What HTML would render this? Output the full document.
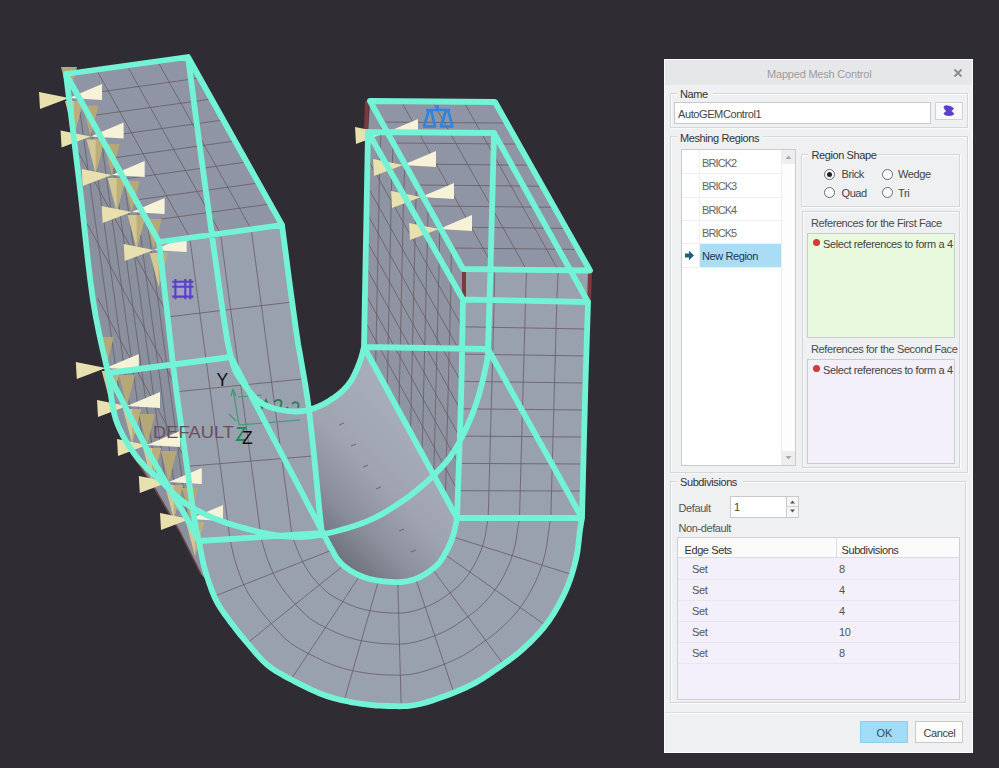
<!DOCTYPE html>
<html><head><meta charset="utf-8"><style>
html,body{margin:0;padding:0;}
body{width:999px;height:768px;overflow:hidden;background:#2f2d33;position:relative;font-family:"Liberation Sans",sans-serif;}
</style></head><body>
<svg width="999" height="768" viewBox="0 0 999 768" style="position:absolute;left:0;top:0"><defs><linearGradient id="cyl" x1="0" y1="1" x2="1" y2="0"><stop offset="0" stop-color="#5f636f"/><stop offset="0.45" stop-color="#8a8f9c"/><stop offset="1" stop-color="#a6abb8"/></linearGradient><linearGradient id="cyl2" gradientUnits="userSpaceOnUse" x1="430" y1="445" x2="325" y2="548"><stop offset="0" stop-color="#a7acb9"/><stop offset="0.4" stop-color="#9fa4b0"/><stop offset="0.72" stop-color="#8b8f9b"/><stop offset="1" stop-color="#6c707b"/></linearGradient></defs><polygon points="108.0,373.0 116.0,420.0 131.0,452.0 155.0,489.0 180.0,532.0 201.0,574.0 209.0,582.5 199.0,541.0" fill="#8a909e" /><polygon points="66.0,74.0 159.0,242.0 168.0,320.0 175.0,380.0 186.0,460.0 195.0,523.0 199.0,541.0 182.0,529.0 155.0,489.0 131.0,452.0 116.0,420.0 108.0,373.0 93.0,300.0 79.0,180.0" fill="#8a909e" /><polygon points="66.0,74.0 188.0,57.0 282.0,225.0 159.0,242.0" fill="#8f95a4" /><polygon points="370.0,101.0 463.0,269.0 463.0,299.5 461.0,400.0 457.0,518.0 364.0,347.0 368.0,132.0" fill="#8e94a2" /><polygon points="370.0,101.0 495.0,102.0 590.0,270.5 463.0,269.0" fill="#8f95a4" /><polygon points="306.0,410.5 308.9,409.8 311.8,408.9 314.7,407.9 317.7,406.8 320.6,405.5 323.5,404.1 326.3,402.6 329.0,401.0 331.6,399.3 334.2,397.6 336.8,395.7 339.2,393.7 341.6,391.7 343.9,389.5 346.0,387.3 348.0,385.0 349.8,382.6 351.5,380.0 353.0,377.3 354.4,374.6 355.7,371.8 356.9,369.1 358.0,366.5 359.0,364.0 359.9,361.6 360.8,359.1 361.5,356.6 362.2,354.2 362.8,352.0 363.2,350.0 363.7,348.3 364.0,347.0 457.0,518.0 457.0,518.0 456.7,519.4 456.4,521.3 455.9,523.5 455.4,526.0 454.9,528.6 454.3,531.2 453.7,533.7 453.0,536.0 452.3,538.1 451.5,540.2 450.7,542.3 449.8,544.3 448.9,546.3 448.0,548.3 447.0,550.2 446.0,552.0 445.0,553.8 444.1,555.5 443.1,557.1 442.1,558.8 441.0,560.3 439.9,561.9 438.5,563.4 437.0,565.0 435.3,566.6 433.4,568.2 431.3,569.9 429.2,571.5 426.9,573.1 424.6,574.5 422.3,575.8 420.0,577.0 417.7,578.0 415.4,578.9 413.1,579.7 410.7,580.4 408.2,581.0 405.7,581.4 402.9,581.8 400.0,582.0 396.8,582.1 393.3,582.0 389.6,581.8 385.8,581.5 382.0,581.1 378.3,580.6 374.8,580.0 371.6,579.4 368.7,578.7 365.9,577.9 363.3,577.0 360.8,576.0 358.5,575.0 356.2,573.9 354.1,572.7 352.0,571.6 350.0,570.4 348.2,569.2 346.4,567.9 344.8,566.6 343.2,565.3 341.7,563.9 340.3,562.5 339.0,561.0 337.8,559.5 336.6,558.0 335.6,556.4 334.7,554.8 333.8,553.1 332.9,551.4 332.0,549.7 331.0,548.0 329.9,546.1 328.8,544.0 327.6,541.9 326.5,539.7 325.4,537.6 324.4,535.7 323.6,534.2 323.0,533.0 320.8,523.4 309.0,412.0" fill="url(#cyl2)" /><polygon points="159.0,242.0 282.0,225.0 296.0,330.0 309.0,410.0 320.8,523.4 323.0,533.0 323.6,534.2 324.4,535.7 325.4,537.6 326.5,539.7 327.6,541.9 328.8,544.0 329.9,546.1 331.0,548.0 332.0,549.7 332.9,551.4 333.8,553.1 334.7,554.8 335.6,556.4 336.6,558.0 337.8,559.5 339.0,561.0 340.3,562.5 341.7,563.9 343.2,565.3 344.8,566.6 346.4,567.9 348.2,569.2 350.0,570.4 352.0,571.6 354.1,572.7 356.2,573.9 358.5,575.0 360.8,576.0 363.3,577.0 365.9,577.9 368.7,578.7 371.6,579.4 374.8,580.0 378.3,580.6 382.0,581.1 385.8,581.5 389.6,581.8 393.3,582.0 396.8,582.1 400.0,582.0 402.9,581.8 405.7,581.4 408.2,581.0 410.7,580.4 413.1,579.7 415.4,578.9 417.7,578.0 420.0,577.0 422.3,575.8 424.6,574.5 426.9,573.1 429.2,571.5 431.3,569.9 433.4,568.2 435.3,566.6 437.0,565.0 438.5,563.4 439.9,561.9 441.0,560.3 442.1,558.8 443.1,557.1 444.1,555.5 445.0,553.8 446.0,552.0 447.0,550.2 448.0,548.3 448.9,546.3 449.8,544.3 450.7,542.3 451.5,540.2 452.3,538.1 453.0,536.0 453.7,533.7 454.3,531.2 454.9,528.6 455.4,526.0 455.9,523.5 456.4,521.3 456.7,519.4 457.0,518.0 461.0,400.0 463.0,299.5 463.0,269.0 590.0,270.5 588.0,302.0 585.0,400.0 582.0,518.0 581.9,518.8 581.7,519.8 581.5,520.9 581.2,522.2 581.0,523.7 580.7,525.5 580.4,527.6 580.0,530.0 579.6,532.8 579.3,536.0 578.9,539.5 578.5,543.3 578.0,547.2 577.5,551.2 576.8,555.2 576.0,559.0 575.1,562.8 574.1,566.6 573.0,570.4 571.9,574.3 570.6,578.2 569.2,582.1 567.7,586.1 566.0,590.0 564.2,594.0 562.2,598.1 560.1,602.2 557.9,606.3 555.5,610.4 553.1,614.4 550.6,618.3 548.0,622.0 545.3,625.6 542.5,629.1 539.5,632.5 536.5,635.8 533.4,639.0 530.3,642.1 527.1,645.1 524.0,648.0 520.9,650.8 517.8,653.4 514.6,656.0 511.4,658.4 508.2,660.8 504.9,663.2 501.5,665.6 498.0,668.0 494.5,670.4 491.0,672.9 487.4,675.3 483.8,677.7 480.0,680.1 476.0,682.4 471.7,684.7 467.0,687.0 461.8,689.3 456.0,691.7 449.9,694.2 443.6,696.6 437.2,698.8 431.1,700.9 425.3,702.6 420.0,704.0 415.3,705.0 410.9,705.7 406.9,706.1 403.1,706.2 399.3,706.3 395.6,706.2 391.9,706.1 388.0,706.0 384.0,705.9 380.0,705.7 376.0,705.5 372.0,705.1 368.0,704.7 364.0,704.2 360.0,703.6 356.0,703.0 352.0,702.3 348.0,701.5 344.0,700.7 340.0,699.8 336.0,698.7 332.0,697.6 328.0,696.4 324.0,695.0 319.9,693.5 315.8,691.7 311.7,689.9 307.5,687.9 303.5,685.9 299.5,683.9 295.6,681.9 292.0,680.0 288.5,678.2 285.2,676.4 282.0,674.6 278.9,672.8 275.9,671.0 273.0,669.1 270.2,667.1 267.5,665.0 264.9,662.7 262.4,660.4 260.1,657.9 257.8,655.4 255.6,652.8 253.4,650.2 251.2,647.6 249.0,645.0 246.8,642.4 244.6,639.8 242.4,637.2 240.2,634.6 238.1,631.9 236.0,629.3 234.0,626.6 232.0,624.0 230.0,621.4 228.1,618.7 226.1,616.1 224.2,613.5 222.4,610.8 220.6,608.2 219.0,605.6 217.5,603.0 216.1,600.4 214.9,597.8 213.8,595.3 212.7,592.7 211.7,590.2 210.8,587.6 209.9,585.1 209.0,582.5 208.1,579.9 207.3,577.4 206.5,574.8 205.7,572.3 205.0,569.7 204.3,567.2 203.6,564.6 203.0,562.0 202.4,559.3 201.8,556.3 201.2,553.2 200.6,550.2 200.1,547.4 199.7,544.8 199.3,542.6 199.0,541.0 195.0,523.0 186.0,460.0 175.0,380.0 168.0,320.0" fill="#99a0ae" /><path d="M96.5,69.8L189.8,237.8 M127.0,65.5L220.5,233.5 M157.5,61.2L251.2,229.2 M77.6,95.0L199.8,78.0 M89.2,116.0L211.5,99.0 M100.9,137.0L223.2,120.0 M112.5,158.0L235.0,141.0 M124.1,179.0L246.8,162.0 M135.8,200.0L258.5,183.0 M147.4,221.0L270.2,204.0 M401.2,101.2L494.8,269.4 M432.5,101.5L526.5,269.8 M463.8,101.8L558.2,270.1 M381.6,122.0L506.9,123.1 M393.2,143.0L518.8,144.1 M404.9,164.0L530.6,165.2 M416.5,185.0L542.5,186.2 M428.1,206.0L554.4,207.3 M439.8,227.0L566.2,228.4 M451.4,248.0L578.1,249.4 M189.8,237.8L230.0,539.0 M220.5,233.5L261.0,537.0 M251.2,229.2L292.0,535.0 M169.0,316.8L292.2,302.0 M179.0,391.5L302.5,379.0 M189.0,466.2L312.8,456.0 M494.2,300.1L488.2,518.0 M525.5,300.8L519.5,518.0 M556.8,301.4L550.8,518.0 M462.2,326.8L587.2,329.0 M461.5,354.1L586.5,356.0 M460.8,381.4L585.8,383.0 M460.0,408.8L585.0,410.0 M459.2,436.1L584.2,437.0 M458.5,463.4L583.5,464.0 M457.8,490.7L582.8,491.0 M494.8,269.4L494.2,300.1 M526.5,269.8L525.5,300.8 M558.2,270.1L556.8,301.4 M77.6,95.0L119.4,394.0 M89.2,116.0L130.8,415.0 M100.9,137.0L142.1,436.0 M112.5,158.0L153.5,457.0 M124.1,179.0L164.9,478.0 M135.8,200.0L176.2,499.0 M147.4,221.0L187.6,520.0 M76.5,148.8L169.0,316.8 M87.0,223.5L179.0,391.5 M97.5,298.2L189.0,466.2 M379.9,152.9L375.6,368.4 M391.8,173.9L387.2,389.8 M403.6,194.8L398.9,411.1 M415.5,215.8L410.5,432.5 M427.4,236.7L422.1,453.9 M439.2,257.6L433.8,475.2 M451.1,278.6L445.4,496.6 M367.5,158.9L462.2,326.8 M367.0,185.8L461.5,354.1 M366.5,212.6L460.8,381.4 M366.0,239.5L460.0,408.8 M365.5,266.4L459.2,436.1 M365.0,293.2L458.5,463.4 M364.5,320.1L457.8,490.7 M381.6,122.0L379.9,152.9 M393.2,143.0L391.8,173.9 M404.9,164.0L403.6,194.8 M416.5,185.0L415.5,215.8 M428.1,206.0L427.4,236.7 M439.8,227.0L439.2,257.6 M451.4,248.0L451.1,278.6 M332.1,550.0L214.2,596.3 M343.5,565.5L247.3,643.0 M359.9,575.6L291.0,679.5 M378.5,580.6L344.2,700.7 M397.8,582.1L401.2,706.3 M415.7,578.8L453.8,692.6 M432.3,569.1L503.5,664.2 M444.7,554.4L545.5,625.3 M452.7,536.8L571.8,574.5 M292.0,535.0 L293.8,540.4 L295.8,545.8 L297.9,551.1 L300.2,556.4 L302.6,561.6 L305.4,566.7 L308.4,571.6 L311.8,576.3 L315.5,580.7 L319.4,584.9 L323.5,588.9 L327.8,592.7 L332.5,596.1 L337.5,599.0 L342.7,601.6 L347.9,604.0 L353.2,606.1 L358.7,608.0 L364.3,609.5 L369.9,610.6 L375.6,611.6 L381.3,612.3 L387.1,612.8 L392.9,613.0 L398.6,613.1 L404.4,612.8 L410.1,611.8 L415.7,610.5 L421.2,608.7 L426.6,606.7 L431.9,604.4 L437.0,601.8 L441.9,598.7 L446.6,595.4 L451.3,592.0 L455.8,588.3 L460.0,584.4 L463.9,580.2 L467.4,575.7 L470.7,570.9 L473.7,566.0 L476.4,560.9 L478.9,555.7 L481.1,550.3 L482.9,544.9 L484.4,539.3 L485.6,533.7 L486.5,528.0 L487.5,522.3 L488.2,518.0 M261.0,537.0 L262.9,544.4 L265.0,551.7 L267.4,559.0 L270.2,566.1 L273.2,573.2 L276.7,579.9 L281.0,586.4 L285.5,592.6 L290.3,598.5 L295.4,604.3 L300.6,609.9 L306.0,615.3 L312.1,620.0 L318.6,624.0 L325.4,627.5 L332.3,630.9 L339.3,634.0 L346.5,636.8 L353.8,638.9 L361.3,640.7 L368.9,642.0 L376.5,643.0 L384.1,643.7 L391.8,644.0 L399.5,644.2 L407.2,643.6 L414.7,642.2 L422.1,640.2 L429.4,637.7 L436.5,635.0 L443.6,632.0 L450.4,628.4 L456.9,624.4 L463.2,620.0 L469.5,615.5 L475.5,610.8 L481.3,605.7 L486.6,600.2 L491.6,594.4 L496.2,588.3 L500.3,581.8 L504.1,575.1 L507.4,568.2 L510.4,561.1 L512.8,553.8 L514.8,546.4 L516.3,538.9 L517.4,531.3 L518.5,523.7 L519.5,518.0 M230.0,539.0 L232.0,548.3 L234.2,557.6 L236.9,566.8 L240.1,575.8 L243.7,584.7 L248.1,593.2 L253.5,601.2 L259.2,608.9 L265.2,616.4 L271.4,623.7 L277.7,630.9 L284.2,637.8 L291.6,643.9 L299.8,649.0 L308.2,653.5 L316.8,657.8 L325.4,661.9 L334.3,665.5 L343.4,668.4 L352.7,670.7 L362.2,672.5 L371.7,673.8 L381.2,674.7 L390.8,675.0 L400.4,675.2 L409.9,674.5 L419.3,672.6 L428.5,669.9 L437.5,666.7 L446.5,663.3 L455.3,659.5 L463.8,655.1 L471.9,650.0 L479.8,644.5 L487.7,639.0 L495.3,633.2 L502.5,626.9 L509.4,620.2 L515.8,613.2 L521.7,605.6 L527.0,597.6 L531.7,589.3 L536.0,580.7 L539.7,571.9 L542.7,562.8 L545.2,553.5 L547.0,544.1 L548.2,534.6 L549.5,525.1 L550.8,518.0" stroke="#685a5e" stroke-width="0.9" fill="none" opacity="0.85"/><path d="M339,425l5,-2M351,446l5,-2M363,467l5,-2M376,489l5,-2M399,531l5,-2M411,552l5,-2" stroke="#5f5f6c" stroke-width="1.1" opacity="0.75"/><polyline points="131,452 155,489 180,532 201,574" fill="none" stroke="#6e4646" stroke-width="1.5"/><path d="M367,101L366,132M464,271L464,299M590,272L589,301" stroke="#7a3a3e" stroke-width="4"/><polygon points="61,67 77,67 69,98" fill="#b5a776"/><polygon points="65,101 83,101 74,135" fill="#d3c794"/><polygon points="74,101 83,101 74,135" fill="#bcae7c"/><polygon points="39,92 40,109 69,98" fill="#e8e0ae"/><polygon points="102,84 102,100 69,98" fill="#f6f2d8"/><polygon points="82.6,105.5 98.6,105.5 90.6,136.5" fill="#b5a776"/><polygon points="86.6,139.5 104.6,139.5 95.6,173.5" fill="#d3c794"/><polygon points="95.6,139.5 104.6,139.5 95.6,173.5" fill="#bcae7c"/><polygon points="60.599999999999994,130.5 61.599999999999994,147.5 90.6,136.5" fill="#e8e0ae"/><polygon points="123.6,122.5 123.6,138.5 90.6,136.5" fill="#f6f2d8"/><polygon points="103.7,144 119.7,144 111.7,175" fill="#b5a776"/><polygon points="107.7,178 125.7,178 116.7,212" fill="#d3c794"/><polygon points="116.7,178 125.7,178 116.7,212" fill="#bcae7c"/><polygon points="81.7,169 82.7,186 111.7,175" fill="#e8e0ae"/><polygon points="144.7,161 144.7,177 111.7,175" fill="#f6f2d8"/><polygon points="123.6,181 139.6,181 131.6,212" fill="#b5a776"/><polygon points="127.6,215 145.6,215 136.6,249" fill="#d3c794"/><polygon points="136.6,215 145.6,215 136.6,249" fill="#bcae7c"/><polygon points="101.6,206 102.6,223 131.6,212" fill="#e8e0ae"/><polygon points="164.6,198 164.6,214 131.6,212" fill="#f6f2d8"/><polygon points="145.7,219 161.7,219 153.7,250" fill="#b5a776"/><polygon points="149.7,253 167.7,253 158.7,287" fill="#d3c794"/><polygon points="158.7,253 167.7,253 158.7,287" fill="#bcae7c"/><polygon points="123.69999999999999,244 124.69999999999999,261 153.7,250" fill="#e8e0ae"/><polygon points="186.7,236 186.7,252 153.7,250" fill="#f6f2d8"/><polygon points="97.8,337 113.8,337 105.8,368" fill="#b5a776"/><polygon points="101.8,371 119.8,371 110.8,405" fill="#d3c794"/><polygon points="110.8,371 119.8,371 110.8,405" fill="#bcae7c"/><polygon points="75.8,362 76.8,379 105.8,368" fill="#e8e0ae"/><polygon points="138.8,354 138.8,370 105.8,368" fill="#f6f2d8"/><polygon points="119,375 135,375 127,406" fill="#b5a776"/><polygon points="123,409 141,409 132,443" fill="#d3c794"/><polygon points="132,409 141,409 132,443" fill="#bcae7c"/><polygon points="97,400 98,417 127,406" fill="#e8e0ae"/><polygon points="160,392 160,408 127,406" fill="#f6f2d8"/><polygon points="139,414 155,414 147,445" fill="#b5a776"/><polygon points="143,448 161,448 152,482" fill="#d3c794"/><polygon points="152,448 161,448 152,482" fill="#bcae7c"/><polygon points="117,439 118,456 147,445" fill="#e8e0ae"/><polygon points="180,431 180,447 147,445" fill="#f6f2d8"/><polygon points="160.8,451 176.8,451 168.8,482" fill="#b5a776"/><polygon points="164.8,485 182.8,485 173.8,519" fill="#d3c794"/><polygon points="173.8,485 182.8,485 173.8,519" fill="#bcae7c"/><polygon points="138.8,476 139.8,493 168.8,482" fill="#e8e0ae"/><polygon points="201.8,468 201.8,484 168.8,482" fill="#f6f2d8"/><polygon points="182,488 198,488 190,519" fill="#b5a776"/><polygon points="186,522 204,522 195,556" fill="#d3c794"/><polygon points="195,522 204,522 195,556" fill="#bcae7c"/><polygon points="160,513 161,530 190,519" fill="#e8e0ae"/><polygon points="223,505 223,521 190,519" fill="#f6f2d8"/><polygon points="355,127 356,144 385,133" fill="#e8e0ae"/><polygon points="418,119 418,135 385,133" fill="#f6f2d8"/><polygon points="373,159 374,176 403,165" fill="#e8e0ae"/><polygon points="436,151 436,167 403,165" fill="#f6f2d8"/><polygon points="391,191 392,208 421,197" fill="#e8e0ae"/><polygon points="454,183 454,199 421,197" fill="#f6f2d8"/><polygon points="409,223 410,240 439,229" fill="#e8e0ae"/><polygon points="472,215 472,231 439,229" fill="#f6f2d8"/><g stroke="#3a9c74" stroke-width="1.2" fill="none"><path d="M233,389L239,425M239,425L300,420M238,397L262,395M236,421L229,414M233,389L231,396M233,389L236,396"/><path d="M237,428H245L237,440H246" stroke="#1f8a5a" stroke-width="1.8"/><path d="M258,398L262,408L266,400L270,410M274,402C278,398 283,400 281,405C279,410 285,411 288,407M292,404C296,400 300,403 298,408" stroke="#2a7a58" stroke-width="1.8"/></g><path d="M66.0,74.0 L188.0,57.0 L282.0,225.0 L159.0,242.0 L66.0,74.0 M66.0,74.0 L67.4,85.4 L69.3,101.0 L71.6,119.5 L74.1,139.7 L76.6,160.3 L79.0,180.0 L81.3,199.7 L83.6,220.7 L85.9,242.1 L88.2,263.0 L90.6,282.6 L93.0,300.0 L95.6,315.7 L98.5,330.5 L101.4,344.0 L104.1,355.8 L106.4,365.6 L108.0,373.0 M188.0,57.0 L189.6,68.9 L191.7,84.9 L194.2,104.1 L197.0,125.4 L200.0,147.7 L203.0,170.0 L206.3,194.2 L210.1,221.4 L214.0,249.8 L217.8,277.0 L221.2,301.1 L224.0,320.0 L226.1,333.1 L227.6,342.1 L228.8,347.9 L229.7,351.6 L230.4,354.3 L231.0,357.0 M159.0,242.0 L160.0,250.7 L161.4,262.9 L163.1,277.2 L164.8,292.4 L166.5,307.1 L168.0,320.0 L169.2,330.8 L170.3,340.6 L171.4,349.9 L172.4,359.2 L173.6,369.1 L175.0,380.0 L176.6,392.4 L178.4,405.8 L180.4,419.8 L182.3,433.9 L184.2,447.4 L186.0,460.0 L187.7,472.0 L189.3,483.9 L190.9,495.4 L192.4,506.0 L193.8,515.3 L195.0,523.0 L196.0,528.8 L196.9,533.0 L197.6,535.9 L198.1,538.0 L198.6,539.6 L199.0,541.0 M282.0,225.0 L283.5,236.7 L285.7,253.1 L288.2,272.5 L290.9,293.0 L293.6,312.7 L296.0,330.0 L298.2,344.4 L300.5,357.3 L302.6,369.5 L304.8,381.8 L306.9,395.0 L309.0,410.0 L311.1,428.2 L313.4,449.2 L315.6,471.1 L317.6,492.1 L319.4,510.1 L320.8,523.4 L321.7,531.1 L322.3,534.6 L322.6,535.3 L322.8,534.4 L322.9,533.2 L323.0,533.0 M108.0,373.0 L231.0,357.0 M199.0,541.0 L323.0,533.0 M108.0,373.0 L150.0,455.0 L186.0,517.0 L199.0,541.0 M231.0,357.0 L323.0,533.0 M370.0,101.0 L495.0,102.0 L590.0,270.5 L463.0,269.0 L370.0,101.0 M368.0,132.0 L494.0,133.0 L588.0,302.0 L463.0,299.5 L368.0,132.0 M368.0,132.0 L364.0,347.0 M494.0,133.0 L493.7,145.9 L493.2,164.0 L492.7,185.3 L492.1,208.0 L491.5,230.2 L491.0,250.0 L490.5,268.7 L489.9,288.0 L489.3,306.8 L488.8,324.0 L488.3,338.4 L488.0,349.0 M463.0,299.5 L462.8,310.2 L462.6,324.9 L462.2,342.4 L461.9,361.5 L461.5,381.1 L461.0,400.0 L460.4,420.0 L459.7,442.4 L458.9,465.3 L458.1,486.8 L457.5,505.0 L457.0,518.0 M588.0,302.0 L587.7,312.4 L587.2,326.7 L586.7,343.6 L586.1,362.2 L585.5,381.4 L585.0,400.0 L584.5,419.9 L583.9,442.2 L583.3,465.1 L582.8,486.7 L582.3,504.9 L582.0,518.0 M364.0,347.0 L488.0,349.0 M457.0,518.0 L582.0,518.0 M364.0,347.0 L457.0,518.0 M488.0,349.0 L582.0,518.0 M199.0,541.0 L199.3,542.6 L199.7,544.8 L200.1,547.4 L200.6,550.2 L201.2,553.2 L201.8,556.3 L202.4,559.3 L203.0,562.0 L203.6,564.6 L204.3,567.2 L205.0,569.7 L205.7,572.3 L206.5,574.8 L207.3,577.4 L208.1,579.9 L209.0,582.5 L209.9,585.1 L210.8,587.6 L211.7,590.2 L212.7,592.7 L213.8,595.3 L214.9,597.8 L216.1,600.4 L217.5,603.0 L219.0,605.6 L220.6,608.2 L222.4,610.8 L224.2,613.5 L226.1,616.1 L228.1,618.7 L230.0,621.4 L232.0,624.0 L234.0,626.6 L236.0,629.3 L238.1,631.9 L240.2,634.6 L242.4,637.2 L244.6,639.8 L246.8,642.4 L249.0,645.0 L251.2,647.6 L253.4,650.2 L255.6,652.8 L257.8,655.4 L260.1,657.9 L262.4,660.4 L264.9,662.7 L267.5,665.0 L270.2,667.1 L273.0,669.1 L275.9,671.0 L278.9,672.8 L282.0,674.6 L285.2,676.4 L288.5,678.2 L292.0,680.0 L295.6,681.9 L299.5,683.9 L303.5,685.9 L307.5,687.9 L311.7,689.9 L315.8,691.7 L319.9,693.5 L324.0,695.0 L328.0,696.4 L332.0,697.6 L336.0,698.7 L340.0,699.8 L344.0,700.7 L348.0,701.5 L352.0,702.3 L356.0,703.0 L360.0,703.6 L364.0,704.2 L368.0,704.7 L372.0,705.1 L376.0,705.5 L380.0,705.7 L384.0,705.9 L388.0,706.0 L391.9,706.1 L395.6,706.2 L399.3,706.3 L403.1,706.2 L406.9,706.1 L410.9,705.7 L415.3,705.0 L420.0,704.0 L425.3,702.6 L431.1,700.9 L437.2,698.8 L443.6,696.6 L449.9,694.2 L456.0,691.7 L461.8,689.3 L467.0,687.0 L471.7,684.7 L476.0,682.4 L480.0,680.1 L483.8,677.7 L487.4,675.3 L491.0,672.9 L494.5,670.4 L498.0,668.0 L501.5,665.6 L504.9,663.2 L508.2,660.8 L511.4,658.4 L514.6,656.0 L517.8,653.4 L520.9,650.8 L524.0,648.0 L527.1,645.1 L530.3,642.1 L533.4,639.0 L536.5,635.8 L539.5,632.5 L542.5,629.1 L545.3,625.6 L548.0,622.0 L550.6,618.3 L553.1,614.4 L555.5,610.4 L557.9,606.3 L560.1,602.2 L562.2,598.1 L564.2,594.0 L566.0,590.0 L567.7,586.1 L569.2,582.1 L570.6,578.2 L571.9,574.3 L573.0,570.4 L574.1,566.6 L575.1,562.8 L576.0,559.0 L576.8,555.2 L577.5,551.2 L578.0,547.2 L578.5,543.3 L578.9,539.5 L579.3,536.0 L579.6,532.8 L580.0,530.0 L580.4,527.6 L580.7,525.5 L581.0,523.7 L581.2,522.2 L581.5,520.9 L581.7,519.8 L581.9,518.8 L582.0,518.0 M323.0,533.0 L323.6,534.2 L324.4,535.7 L325.4,537.6 L326.5,539.7 L327.6,541.9 L328.8,544.0 L329.9,546.1 L331.0,548.0 L332.0,549.7 L332.9,551.4 L333.8,553.1 L334.7,554.8 L335.6,556.4 L336.6,558.0 L337.8,559.5 L339.0,561.0 L340.3,562.5 L341.7,563.9 L343.2,565.3 L344.8,566.6 L346.4,567.9 L348.2,569.2 L350.0,570.4 L352.0,571.6 L354.1,572.7 L356.2,573.9 L358.5,575.0 L360.8,576.0 L363.3,577.0 L365.9,577.9 L368.7,578.7 L371.6,579.4 L374.8,580.0 L378.3,580.6 L382.0,581.1 L385.8,581.5 L389.6,581.8 L393.3,582.0 L396.8,582.1 L400.0,582.0 L402.9,581.8 L405.7,581.4 L408.2,581.0 L410.7,580.4 L413.1,579.7 L415.4,578.9 L417.7,578.0 L420.0,577.0 L422.3,575.8 L424.6,574.5 L426.9,573.1 L429.2,571.5 L431.3,569.9 L433.4,568.2 L435.3,566.6 L437.0,565.0 L438.5,563.4 L439.9,561.9 L441.0,560.3 L442.1,558.8 L443.1,557.1 L444.1,555.5 L445.0,553.8 L446.0,552.0 L447.0,550.2 L448.0,548.3 L448.9,546.3 L449.8,544.3 L450.7,542.3 L451.5,540.2 L452.3,538.1 L453.0,536.0 L453.7,533.7 L454.3,531.2 L454.9,528.6 L455.4,526.0 L455.9,523.5 L456.4,521.3 L456.7,519.4 L457.0,518.0 M108.0,373.0 L108.5,376.7 L109.2,381.7 L109.9,387.7 L110.8,394.2 L111.8,401.1 L113.0,407.9 L114.4,414.3 L116.0,420.0 L117.9,425.1 L120.1,430.1 L122.4,434.8 L125.0,439.4 L127.7,443.9 L130.4,448.1 L133.2,452.1 L136.0,456.0 L138.8,459.6 L141.6,462.8 L144.4,465.7 L147.3,468.6 L150.3,471.3 L153.4,474.1 L156.6,476.9 L160.0,480.0 L163.4,483.3 L166.8,486.7 L170.3,490.2 L173.9,493.8 L177.7,497.3 L181.8,500.7 L186.2,503.9 L191.0,507.0 L196.2,509.9 L201.7,512.7 L207.6,515.5 L213.7,518.1 L220.0,520.5 L226.6,522.9 L233.2,525.0 L240.0,527.0 L247.0,528.9 L254.2,530.7 L261.7,532.5 L269.3,534.1 L277.0,535.4 L284.7,536.4 L292.4,536.9 L300.0,537.0 L307.6,536.5 L315.4,535.6 L323.3,534.2 L331.2,532.5 L338.9,530.5 L346.3,528.4 L353.4,526.2 L360.0,524.0 L366.1,521.7 L371.8,519.2 L377.1,516.6 L382.2,513.9 L387.0,511.0 L391.8,508.1 L396.4,505.1 L401.0,502.0 L405.6,498.9 L410.1,495.6 L414.4,492.2 L418.7,488.8 L422.8,485.3 L426.7,481.9 L430.5,478.4 L434.0,475.0 L437.3,471.7 L440.3,468.6 L443.2,465.5 L445.9,462.4 L448.5,459.2 L451.0,455.7 L453.5,452.0 L456.0,448.0 L458.6,443.5 L461.1,438.7 L463.7,433.7 L466.2,428.4 L468.6,423.0 L470.9,417.6 L473.0,412.2 L475.0,407.0 L476.8,401.7 L478.5,396.2 L480.1,390.6 L481.6,385.0 L482.9,379.6 L484.1,374.6 L485.1,370.0 L486.0,366.0 L486.7,362.6 L487.2,359.7 L487.5,357.1 L487.7,354.9 L487.8,353.1 L487.9,351.5 L487.9,350.1 L488.0,349.0 M231.0,357.0 L231.3,358.1 L231.7,359.6 L232.2,361.4 L232.7,363.3 L233.3,365.4 L234.1,367.6 L235.0,369.8 L236.0,372.0 L237.2,374.2 L238.7,376.6 L240.2,379.1 L241.9,381.6 L243.7,384.1 L245.5,386.6 L247.3,388.9 L249.0,391.0 L250.7,393.0 L252.3,394.8 L253.9,396.6 L255.5,398.3 L257.2,399.9 L259.0,401.3 L260.9,402.7 L263.0,404.0 L265.3,405.2 L267.7,406.2 L270.3,407.2 L273.0,408.1 L275.7,408.8 L278.5,409.5 L281.3,410.0 L284.0,410.5 L286.7,410.9 L289.4,411.2 L292.1,411.4 L294.9,411.5 L297.6,411.5 L300.4,411.3 L303.2,411.0 L306.0,410.5 L308.9,409.8 L311.8,408.9 L314.7,407.9 L317.7,406.8 L320.6,405.5 L323.5,404.1 L326.3,402.6 L329.0,401.0 L331.6,399.3 L334.2,397.6 L336.8,395.7 L339.2,393.7 L341.6,391.7 L343.9,389.5 L346.0,387.3 L348.0,385.0 L349.8,382.6 L351.5,380.0 L353.0,377.3 L354.4,374.6 L355.7,371.8 L356.9,369.1 L358.0,366.5 L359.0,364.0 L359.9,361.6 L360.8,359.1 L361.5,356.6 L362.2,354.2 L362.8,352.0 L363.2,350.0 L363.7,348.3 L364.0,347.0" stroke="#72f3d5" stroke-width="5.8" fill="none" stroke-linejoin="round" stroke-linecap="round"/><rect x="175" y="281" width="15.5" height="15.5" fill="#a9a3d6" opacity="0.6"/><g stroke="#5a3fc8" stroke-width="2.1" fill="none"><path d="M175.4,279V299.2M185.3,279V299.2M190.3,279V299.2M172.3,281.7H193.4M172.3,286.7H193.4M172.3,296.6H193.4"/></g><g stroke="#2b84e0" stroke-width="2.6" fill="none" stroke-linejoin="round"><path d="M437.5,105V110M426,110H450M429,110L424,126.5H435L431,110M446,110L441,126.5H452.5L448,110"/></g><text x="216.5" y="385.5" font-family="Liberation Sans" font-size="17.5" fill="#0e0e0e">Y</text><text x="153" y="437.5" font-family="Liberation Sans" font-size="16.5" fill="#6a5058" textLength="81" lengthAdjust="spacingAndGlyphs">DEFAULT</text><text x="242" y="444" font-family="Liberation Sans" font-size="17.5" fill="#0e0e0e">Z</text></svg>
<style>
.d{position:absolute;box-sizing:border-box;}
.t{position:absolute;font-size:11px;line-height:11px;letter-spacing:-0.4px;color:#3c3c3c;white-space:nowrap;}
.g{position:absolute;box-sizing:border-box;border:1px solid #d4d6d9;box-shadow:inset 1px 1px 0 #fafbfc, 1px 1px 0 #fafbfc;}
.rad{position:absolute;box-sizing:border-box;width:11px;height:11px;border-radius:50%;border:1px solid #6a6a6a;background:#fdfdfd;}
.rl{position:absolute;left:682px;width:99px;height:1px;background:#efefef;}
.tr{position:absolute;left:678px;width:281px;height:1px;background:#e9e6f1;}
</style>
<!-- dialog frame -->
<div class="d" style="left:664px;top:59px;width:309px;height:694px;background:#eef0f2;border:1.5px solid #fafbfc;"></div>
<div class="d" style="left:665px;top:60px;width:307px;height:25px;background:#e6e7e9;"></div>
<div class="t" style="left:767px;top:69px;color:#9c9c9c;letter-spacing:-0.2px;">Mapped Mesh Control</div>
<svg class="d" style="left:953px;top:68px" width="10" height="10"><path d="M1.5,1.5L8.5,8.5M8.5,1.5L1.5,8.5" stroke="#8a8a8a" stroke-width="1.8"/></svg>

<!-- Name group -->
<div class="g" style="left:670px;top:93px;width:298px;height:35px;"></div>
<div class="d" style="left:677px;top:88px;width:36px;height:12px;background:#eef0f2;"></div>
<div class="t" style="left:680px;top:89px;color:#333;">Name</div>
<div class="d" style="left:674px;top:102px;width:257px;height:22px;background:#fff;border:1px solid #c8cacd;"></div>
<div class="t" style="left:678px;top:108.5px;color:#444;">AutoGEMControl1</div>
<div class="d" style="left:935px;top:102px;width:28px;height:18px;background:#f9f9fb;border:1px solid #cfd1d4;"></div>
<svg class="d" style="left:940px;top:104px" width="18" height="14"><path d="M4,2.5C6,1 11,2 13.5,4.5C13,6 11,6.5 10.5,7C12,7.5 14,9 13.5,10.5C11,12 6,12 4,10C4,8.5 6,7.5 7,7C5.5,6.5 4,5 4,2.5Z" fill="#5b3ecb" stroke="#5b3ecb" stroke-width="0.8" stroke-linejoin="round"/></svg>

<!-- Meshing regions group -->
<div class="g" style="left:670px;top:136px;width:298px;height:337px;"></div>
<div class="d" style="left:677px;top:131px;width:86px;height:12px;background:#eef0f2;"></div>
<div class="t" style="left:680px;top:132.5px;color:#333;">Meshing Regions</div>

<!-- list -->
<div class="d" style="left:681px;top:149px;width:115px;height:317px;background:#fff;border:1px solid #c9cbce;"></div>
<div class="d" style="left:699px;top:150px;width:1px;height:117px;background:#f1f1f1;"></div>
<div class="rl" style="top:173px"></div><div class="rl" style="top:197px"></div><div class="rl" style="top:220px"></div><div class="rl" style="top:243px"></div><div class="rl" style="top:267px"></div>
<div class="d" style="left:781px;top:150px;width:14px;height:315px;background:#fdfdfd;border-left:1px solid #ececec;"></div>
<div class="d" style="left:782px;top:150px;width:13px;height:14px;background:#eeeeee;"></div>
<div class="d" style="left:782px;top:451px;width:13px;height:14px;background:#eeeeee;"></div>
<svg class="d" style="left:782px;top:150px" width="13" height="14"><path d="M3.5,9L6.5,5.5L9.5,9Z" fill="#a8a8a8"/></svg>
<svg class="d" style="left:782px;top:451px" width="13" height="14"><path d="M3.5,5L6.5,8.5L9.5,5Z" fill="#a8a8a8"/></svg>
<div class="t" style="left:702px;top:157.7px;color:#666;letter-spacing:-0.9px;">BRICK2</div>
<div class="t" style="left:702px;top:181.2px;color:#666;letter-spacing:-0.9px;">BRICK3</div>
<div class="t" style="left:702px;top:204.7px;color:#666;letter-spacing:-0.9px;">BRICK4</div>
<div class="t" style="left:702px;top:227.7px;color:#666;letter-spacing:-0.9px;">BRICK5</div>
<div class="d" style="left:700px;top:244px;width:81px;height:23px;background:#abdcf5;"></div>
<div class="t" style="left:702px;top:251.2px;color:#233548;">New Region</div>
<svg class="d" style="left:684px;top:250px" width="11" height="11"><path d="M1,3.5H5V0.8L10,5.5L5,10.2V7.5H1Z" fill="#1d5f80"/></svg>

<!-- region shape -->
<div class="g" style="left:801px;top:154px;width:159px;height:53px;"></div>
<div class="d" style="left:808px;top:149px;width:70px;height:12px;background:#eef0f2;"></div>
<div class="t" style="left:811.5px;top:150px;color:#333;">Region Shape</div>
<div class="rad" style="left:824px;top:168.5px;"></div><div class="d" style="left:827px;top:171.5px;width:5px;height:5px;border-radius:50%;background:#222;"></div>
<div class="rad" style="left:881.5px;top:168.5px;"></div>
<div class="rad" style="left:824px;top:187px;"></div>
<div class="rad" style="left:881.5px;top:187px;"></div>
<div class="t" style="left:841.5px;top:169px;color:#444;">Brick</div>
<div class="t" style="left:898px;top:169px;color:#444;">Wedge</div>
<div class="t" style="left:841.5px;top:187.5px;color:#444;">Quad</div>
<div class="t" style="left:898px;top:187.5px;color:#444;">Tri</div>

<!-- references -->
<div class="g" style="left:802px;top:211px;width:158px;height:257px;"></div>
<div class="t" style="left:811px;top:218px;color:#4a4a4a;">References for the First Face</div>
<div class="d" style="left:807px;top:233px;width:148px;height:105px;background:#e8f9de;border:1px solid #c9cdca;"></div>
<div class="d" style="left:812.5px;top:239px;width:7px;height:7px;border-radius:50%;background:#d43a3a;"></div>
<div class="t" style="left:823px;top:238.7px;color:#444;">Select references to form a 4</div>
<div class="d" style="left:803px;top:338px;width:156px;height:21px;background:#eef0f2;"></div>
<div class="t" style="left:811px;top:344px;color:#4a4a4a;">References for the Second Face</div>
<div class="d" style="left:807px;top:359px;width:148px;height:105px;background:#f3effb;border:1px solid #cdcbd2;"></div>
<div class="d" style="left:812.5px;top:365px;width:7px;height:7px;border-radius:50%;background:#d43a3a;"></div>
<div class="t" style="left:823px;top:364.5px;color:#444;">Select references to form a 4</div>

<!-- subdivisions -->
<div class="g" style="left:670px;top:481px;width:296px;height:222px;"></div>
<div class="d" style="left:677px;top:476px;width:66px;height:12px;background:#eef0f2;"></div>
<div class="t" style="left:680px;top:477.3px;color:#333;">Subdivisions</div>
<div class="t" style="left:678.5px;top:502.5px;color:#555;">Default</div>
<div class="d" style="left:730px;top:496px;width:57px;height:22px;background:#fff;border:1px solid #c8cacd;"></div>
<div class="t" style="left:734px;top:502px;color:#444;">1</div>
<div class="d" style="left:786px;top:496px;width:13px;height:22px;background:#f6f6f6;border:1px solid #c8cacd;"></div>
<div class="d" style="left:787px;top:506px;width:11px;height:1px;background:#d0d0d0;"></div>
<svg class="d" style="left:786px;top:496px" width="13" height="22"><path d="M4,7.5L6.5,4.5L9,7.5Z M4,13.5L6.5,16.5L9,13.5Z" fill="#555"/></svg>
<div class="t" style="left:678.5px;top:523px;color:#555;">Non-default</div>

<div class="d" style="left:677px;top:537px;width:283px;height:163px;background:#f3f0fb;border:1px solid #cfcfd4;"></div>
<div class="d" style="left:678px;top:538px;width:281px;height:20px;background:#fbfbfc;border-bottom:1px solid #dcdce0;"></div>
<div class="d" style="left:836px;top:538px;width:1px;height:20px;background:#dedede;"></div>
<div class="t" style="left:684.5px;top:544.5px;color:#333;">Edge Sets</div>
<div class="t" style="left:841.5px;top:545px;color:#333;">Subdivisions</div>
<div class="tr" style="top:579px"></div><div class="tr" style="top:600px"></div><div class="tr" style="top:621px"></div><div class="tr" style="top:642px"></div><div class="tr" style="top:663px"></div>
<div class="t" style="left:692px;top:564px;color:#555;">Set</div><div class="t" style="left:839px;top:564px;color:#555;">8</div>
<div class="t" style="left:692px;top:585px;color:#555;">Set</div><div class="t" style="left:839px;top:585px;color:#555;">4</div>
<div class="t" style="left:692px;top:606px;color:#555;">Set</div><div class="t" style="left:839px;top:606px;color:#555;">4</div>
<div class="t" style="left:692px;top:627px;color:#555;">Set</div><div class="t" style="left:839px;top:627px;color:#555;">10</div>
<div class="t" style="left:692px;top:648px;color:#555;">Set</div><div class="t" style="left:839px;top:648px;color:#555;">8</div>

<!-- footer -->
<div class="d" style="left:665px;top:712px;width:307px;height:1px;background:#dadcdf;"></div>
<div class="d" style="left:665px;top:713px;width:307px;height:1px;background:#fafbfc;"></div>
<div class="d" style="left:860px;top:721px;width:48px;height:22px;background:#a0dcf7;border:1px solid #8fcdea;"></div>
<div class="t" style="left:876.5px;top:728px;color:#3a4a58;letter-spacing:0">OK</div>
<div class="d" style="left:915px;top:721px;width:48px;height:22px;background:#fbfbfb;border:1px solid #c9c9c9;"></div>
<div class="t" style="left:923.5px;top:728px;color:#444;">Cancel</div>

</body></html>
